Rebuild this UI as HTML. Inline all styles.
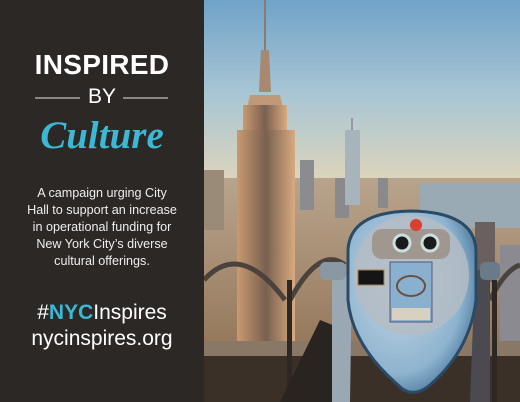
<!DOCTYPE html>
<html><head><meta charset="utf-8"><style>
*{margin:0;padding:0}
body{width:520px;height:402px;overflow:hidden;background:#2c2825;position:relative;font-family:"Liberation Sans",sans-serif}
#left{position:absolute;left:0;top:0;width:204px;height:402px;background:#2c2825;color:#fff;text-align:center}
.t1{position:absolute;top:49px;left:0;width:204px;font-size:28px;font-weight:bold;letter-spacing:0.3px}
.by{position:absolute;top:85px;left:0;width:204px;font-size:21px}
.ln{position:absolute;top:97px;height:2px;width:45px;background:#8a857f}
.cult{position:absolute;top:113px;left:0;width:204px;font-family:"Liberation Serif",serif;font-style:italic;font-weight:bold;font-size:39px;color:#3ab8d4}
.p{position:absolute;top:185px;left:0;width:204px;font-size:12.6px;line-height:17px;color:#eee}
.h{position:absolute;top:301px;left:0;width:204px;font-size:21px}
.h span{color:#3ab8d4;font-weight:bold}
.u{position:absolute;top:327px;left:0;width:204px;font-size:21px}
svg{position:absolute;left:204px;top:0}
</style></head><body>
<div id="left">
<div class="t1">INSPIRED</div>
<div class="ln" style="left:35px"></div><div class="ln" style="left:123px"></div>
<div class="by">BY</div>
<div class="cult">Culture</div>
<div class="p">A campaign urging City<br>Hall to support an increase<br>in operational funding for<br>New York City’s diverse<br>cultural offerings.</div>
<div class="h">#<span>NYC</span>Inspires</div>
<div class="u">nycinspires.org</div>
</div>
<svg width="316" height="402" viewBox="204 0 316 402">
<defs>
<linearGradient id="sky" x1="0" y1="0" x2="0" y2="1"><stop offset="0" stop-color="#6fa3c8"/><stop offset="0.5" stop-color="#a9c6d4"/><stop offset="1" stop-color="#e2d6b8"/></linearGradient>
<linearGradient id="city" x1="0" y1="0" x2="0" y2="1"><stop offset="0" stop-color="#b8a48c"/><stop offset="1" stop-color="#8a6a4c"/></linearGradient>
<linearGradient id="esb" x1="0" y1="0" x2="1" y2="0"><stop offset="0" stop-color="#c89a70"/><stop offset="0.5" stop-color="#7a6050"/><stop offset="1" stop-color="#d8aa80"/></linearGradient>
<radialGradient id="vw" cx="0.4" cy="0.4" r="0.7"><stop offset="0" stop-color="#c8d8e4"/><stop offset="0.7" stop-color="#8eb4d0"/><stop offset="1" stop-color="#3c6a90"/></radialGradient>
</defs>
<rect x="204" y="0" width="316" height="190" fill="url(#sky)"/>
<rect x="204" y="178" width="316" height="224" fill="url(#city)"/>
<rect x="420" y="183" width="100" height="45" fill="#9aaab4"/>
<rect x="204" y="170" width="20" height="60" fill="#9a8a78"/>
<rect x="300" y="160" width="14" height="50" fill="#8b8c90"/>
<rect x="335" y="178" width="14" height="40" fill="#8a8a8c"/>
<rect x="378" y="178" width="10" height="30" fill="#8a8a8c"/>
<rect x="345" y="130" width="15" height="75" fill="#a8b4bc"/>
<line x1="352" y1="118" x2="352" y2="130" stroke="#889" stroke-width="1.5"/>
<rect x="475" y="222" width="20" height="60" fill="#6a6060"/>
<rect x="500" y="245" width="20" height="100" fill="#8a8a90"/>
<line x1="265" y1="0" x2="265" y2="55" stroke="#8a7a70" stroke-width="2"/>
<polygon points="261,50 269,50 271,92 259,92" fill="#a88870"/>
<polygon points="250,95 280,95 283,108 247,108" fill="#c09a78"/>
<rect x="243" y="105" width="44" height="30" fill="url(#esb)"/>
<rect x="237" y="130" width="58" height="272" fill="url(#esb)"/>
<rect x="204" y="341" width="316" height="15" fill="#8a7866"/>
<rect x="204" y="356" width="316" height="46" fill="#3a3028"/>
<path d="M204 280 Q240 240 285 300 M290 300 Q320 245 345 265 M490 300 Q505 270 520 265" stroke="#4a423c" stroke-width="5" fill="none"/>
<rect x="287" y="280" width="5" height="122" fill="#2e2824"/>
<rect x="492" y="280" width="5" height="122" fill="#2e2824"/>
<path d="M280 402 L320 320 L345 330 L345 402 Z" fill="#2a2420"/>
<path d="M332 275 L332 402 L350 402 L352 275 Z" fill="#9aa8b4"/>
<path d="M475 270 L490 270 L490 402 L470 402 Z" fill="#4a4a50"/>
<rect x="320" y="262" width="26" height="18" rx="5" fill="#8a98a4"/>
<rect x="480" y="262" width="20" height="18" rx="5" fill="#6a7a88"/>
<path d="M348 250 Q350 212 411 211 Q474 212 476 250 L476 300 Q470 350 430 385 Q412 400 398 385 Q352 345 348 300 Z" fill="url(#vw)" stroke="#2a4a66" stroke-width="3"/>
<ellipse cx="411" cy="275" rx="58" ry="60" fill="#b4bcc4" opacity="0.85"/>
<rect x="372" y="229" width="78" height="30" rx="10" fill="#a09890"/>
<circle cx="402" cy="243" r="8" fill="#1a1a1a" stroke="#cdd" stroke-width="3"/>
<circle cx="430" cy="243" r="8" fill="#1a1a1a" stroke="#cdd" stroke-width="3"/>
<circle cx="416" cy="225" r="6" fill="#d84030"/>
<rect x="358" y="270" width="26" height="15" fill="#151515" stroke="#a08050"/>
<rect x="390" y="262" width="42" height="60" fill="#8ab0d0" stroke="#557"/>
<ellipse cx="411" cy="286" rx="14" ry="10" fill="none" stroke="#6a5040" stroke-width="2"/>
<rect x="392" y="308" width="38" height="12" fill="#d8d0c0"/>
</svg>
</body></html>
